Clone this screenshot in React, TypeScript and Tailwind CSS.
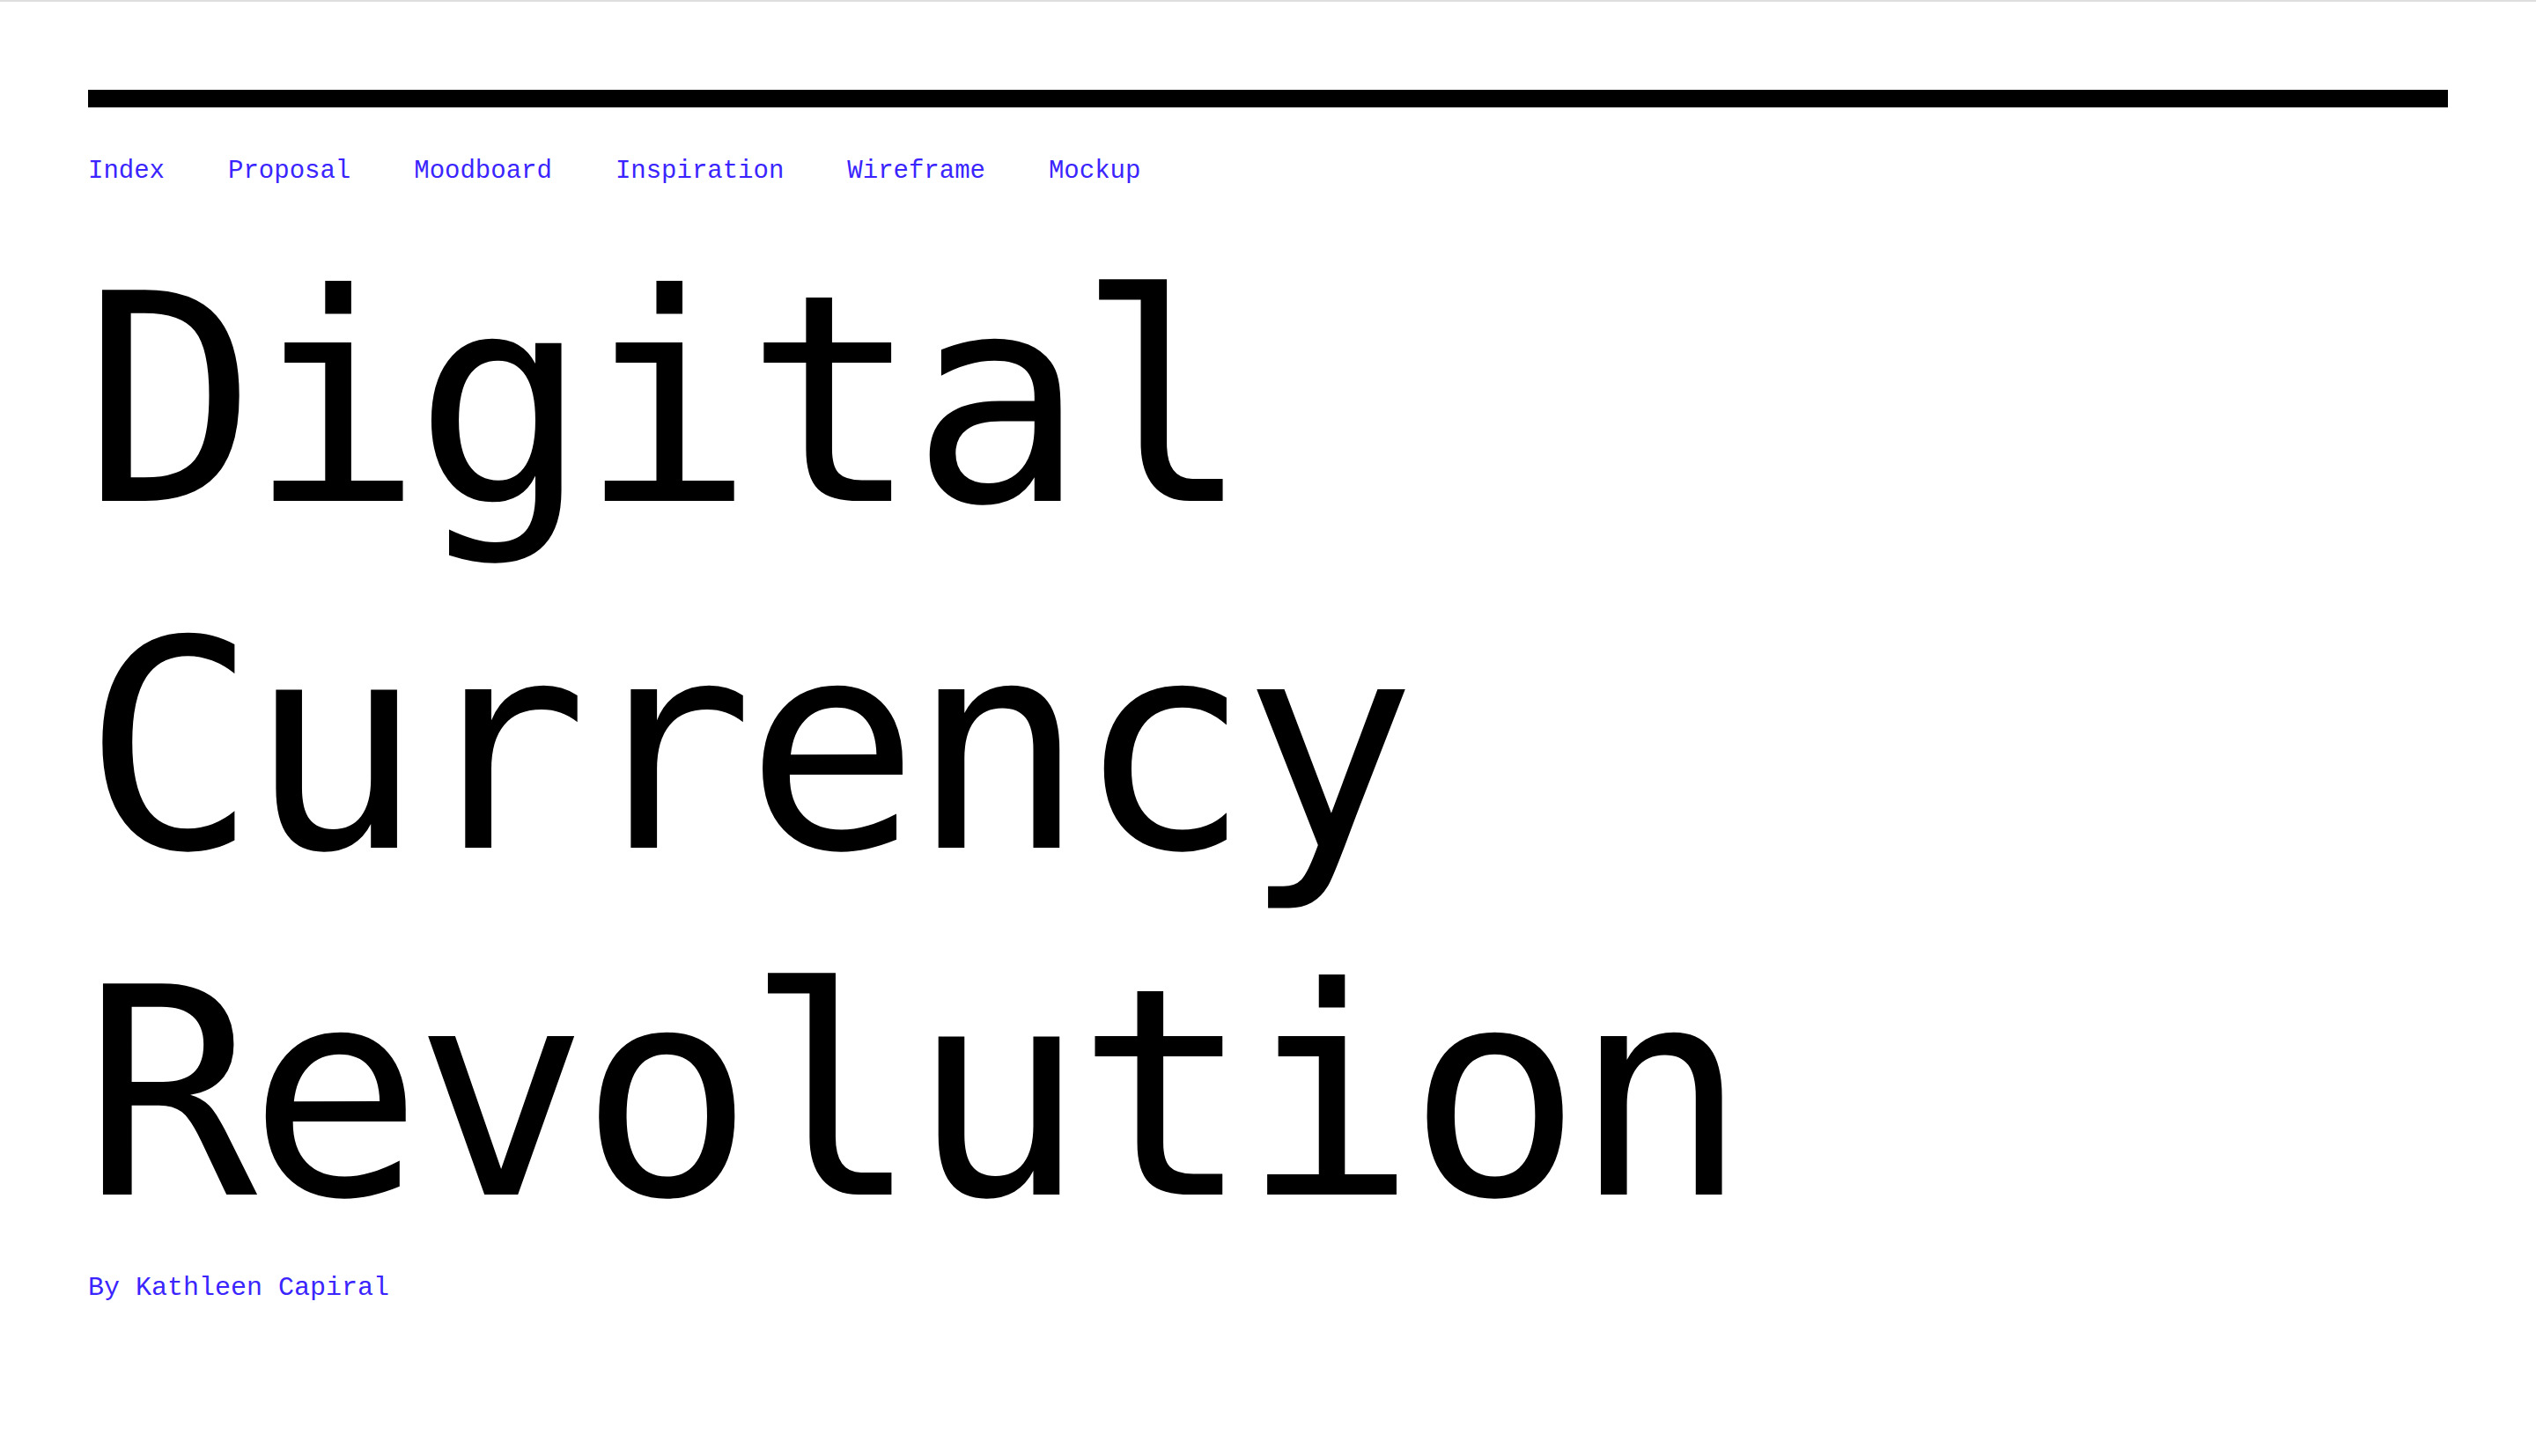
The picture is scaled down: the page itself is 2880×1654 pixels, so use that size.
export default function App() {
  const links = ["Index", "Proposal", "Moodboard", "Inspiration", "Wireframe", "Mockup"];
  const title = ["Digital", "Currency", "Revolution"];

  return (
    <div className="min-h-screen bg-white border-t-2 border-[#dedede]">
      <div className="px-[100px] pt-[100px]">
        <div className="h-[20px] bg-black" />

        <nav className="mt-[58px] flex gap-[72px] text-[29px] leading-[29px] text-[#3b25ff] font-['Liberation_Mono',monospace]">
          {links.map((l) => (
            <a key={l} href="#" className="hover:underline">
              {l}
            </a>
          ))}
        </nav>

        <h1 className="mt-[50px] -ml-[6px] text-[329px] leading-[394px] tracking-[-10px] text-black font-normal font-['DejaVu_Sans_Mono',monospace]">
          {title.map((t) => (
            <div key={t}>{t}</div>
          ))}
        </h1>

        <p className="mt-[8px] text-[30px] leading-[29px] text-[#3b25ff] font-['Liberation_Mono',monospace]">
          By Kathleen Capiral
        </p>
      </div>
    </div>
  );
}
